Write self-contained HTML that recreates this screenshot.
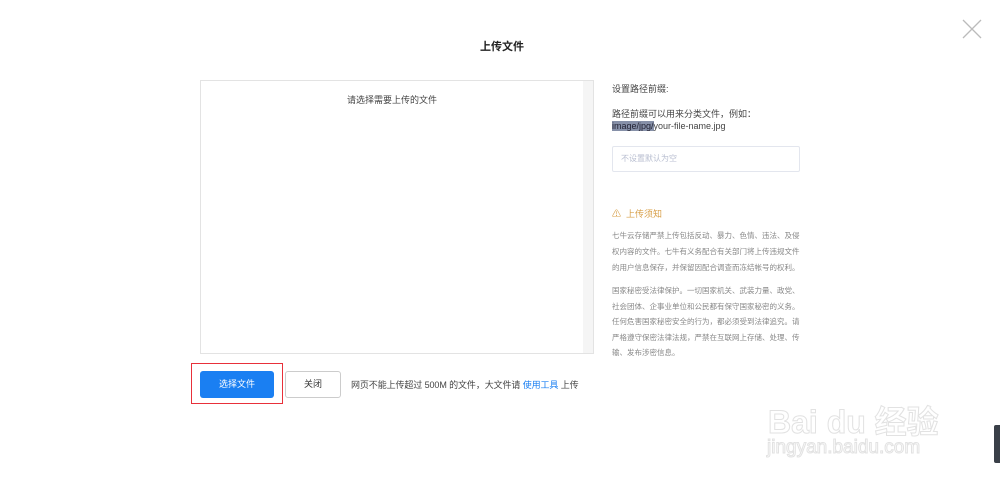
<!DOCTYPE html>
<html><head><meta charset="utf-8"><style>
body{margin:0;width:1000px;height:483px;background:#fff;position:relative;overflow:hidden;font-family:"Liberation Sans","Noto Sans CJK SC",sans-serif;color:#333}
.a{position:absolute;white-space:nowrap}
</style></head><body>
<div class="a" style="left:480px;top:38px;font-size:11px;font-weight:bold;color:#222">上传文件</div>
<svg class="a" style="left:962px;top:19px" width="20" height="20"><path d="M1 1L19 19M19 1L1 19" stroke="#bbb" stroke-width="1.3"/></svg>
<div class="a" style="left:200px;top:80px;width:394px;height:274px;border:1px solid #e3e3e3;box-sizing:border-box"></div>
<div class="a" style="left:583px;top:81px;width:10px;height:272px;background:#f5f5f5"></div>
<div class="a" style="left:347px;top:93px;font-size:9px;color:#444">请选择需要上传的文件</div>
<div class="a" style="left:191px;top:363px;width:92px;height:41px;border:1.5px solid #e8303a;box-sizing:border-box"></div>
<div class="a" style="left:200px;top:371px;width:74px;height:27px;background:#1a7ff2;border-radius:3px;color:#fff;font-size:9px;line-height:27px;text-align:center">选择文件</div>
<div class="a" style="left:285px;top:371px;width:56px;height:27px;border:1px solid #ccc;box-sizing:border-box;border-radius:3px;font-size:9px;line-height:25px;text-align:center">关闭</div>
<div class="a" style="left:351px;top:378px;font-size:9px;color:#444;letter-spacing:-0.1px">网页不能上传超过 500M 的文件，大文件请 <span style="color:#1a7ff2">使用工具</span> 上传</div>
<div class="a" style="left:612px;top:82px;font-size:9px;color:#444">设置路径前缀:</div>
<div class="a" style="left:612px;top:107px;font-size:9px;color:#444">路径前缀可以用来分类文件，例如：</div>
<div class="a" style="left:612px;top:121px;font-size:9px;color:#444"><span style="background:#8690a8;color:#223">image/jpg/</span>your-file-name.jpg</div>
<div class="a" style="left:612px;top:146px;width:188px;height:26px;border:1px solid #e3e6ee;box-sizing:border-box;border-radius:2px;font-size:8px;color:#b8bed0;line-height:24px;padding-left:8px">不设置默认为空</div>
<div class="a" style="left:612px;top:207px;font-size:9px;color:#d8a04a">⚠ &nbsp;上传须知</div>
<div class="a" style="left:612px;top:228px;font-size:7.5px;line-height:16px;color:#888">七牛云存储严禁上传包括反动、暴力、色情、违法、及侵<br>权内容的文件。七牛有义务配合有关部门将上传违规文件<br>的用户信息保存，并保留因配合调查而冻结帐号的权利。</div>
<div class="a" style="left:612px;top:283px;font-size:7.5px;line-height:15.5px;color:#888">国家秘密受法律保护。一切国家机关、武装力量、政党、<br>社会团体、企事业单位和公民都有保守国家秘密的义务。<br>任何危害国家秘密安全的行为，都必须受到法律追究。请<br>严格遵守保密法律法规，严禁在互联网上存储、处理、传<br>输、发布涉密信息。</div>
<div class="a" style="left:768px;top:397px;font-size:32px;color:#fff;-webkit-text-stroke:1px #e2e2e2;font-weight:bold">Bai du 经验</div>
<div class="a" style="left:767px;top:437px;font-size:19px;color:#fff;-webkit-text-stroke:1px #e2e2e2">jingyan.baidu.com</div>
<div class="a" style="left:994px;top:425px;width:6px;height:38px;background:#3a4048;border-radius:2px 0 0 2px"></div>
</body></html>
